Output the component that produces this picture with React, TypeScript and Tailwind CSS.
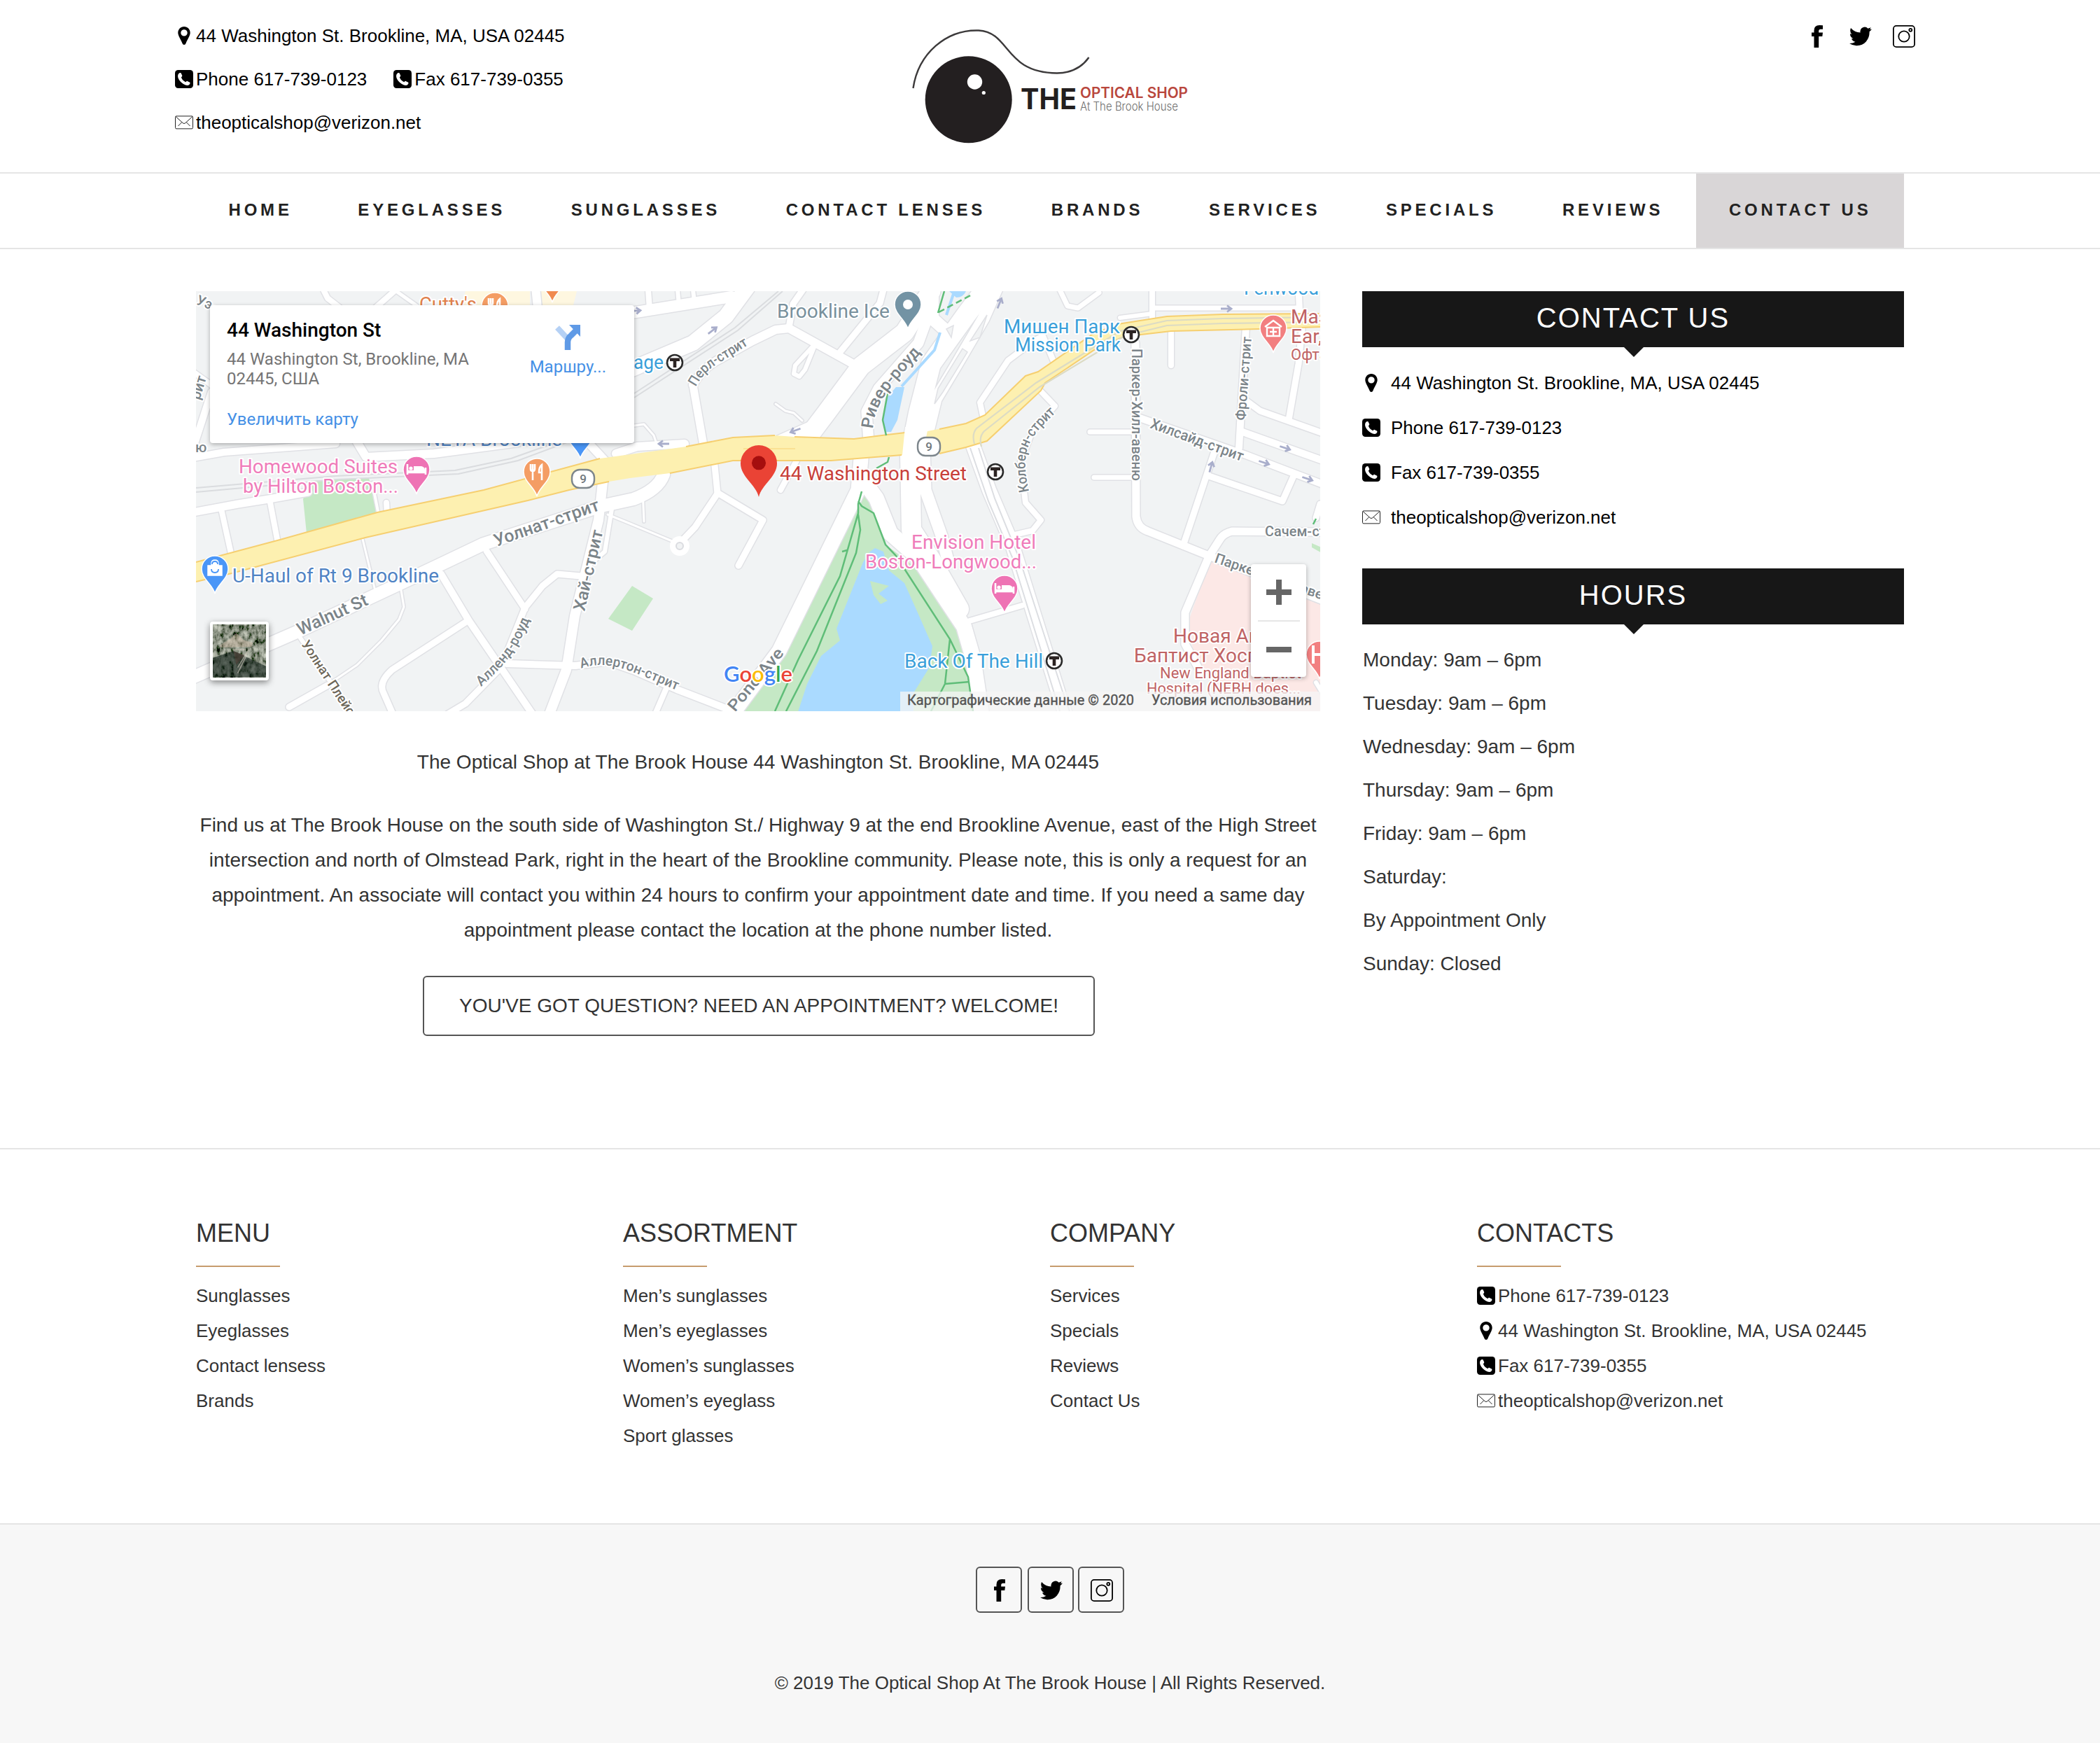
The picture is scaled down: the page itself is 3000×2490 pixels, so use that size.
import type { ReactNode } from "react";

type Road = [string, number];

const ROADS: Road[] = [
  ["M1330 416L1292 475L1230 523L1178 593L1150 630", 27],
  ["M1180 598L1108 630", 12],
  ["M896 448L1045 424", 16],
  ["M1068 410L1037 452L990 490L896 530", 22],
  ["M990 550L1005 636", 11],
  ["M990 550Q1003 525 1030 512L1075 487L1108 471L1127 469L1228 525", 12],
  ["M1127 468L1133 434L1147 414", 9],
  ["M1262 414L1257 433L1200 503", 9],
  ["M1163 496L1150 528L1142 538L1134 534L1136 522L1160 496", 6],
  ["M1108 577L1122 587L1134 590L1146 601", 3],
  ["M1241 632L1238 588L1255 555L1312 490L1328 446", 15],
  ["M1425 410L1405 455L1367 520L1337 570L1320 640L1322 700L1345 765L1354 800", 17],
  ["M1410 410L1380 450L1330 520L1312 590L1300 650L1302 757L1330 800L1370 870", 28],
  ["M1332 410L1332 455L1362 482", 18],
  ["M1230 655L1226 700L1113 930L1035 1035", 21],
  ["M1236 690L1252 712L1272 762L1312 797L1347 850L1377 895L1390 940L1402 1020", 22],
  ["M1021 665L1025 705L993 753L975 772", 9],
  ["M1025 704L1090 743L1055 808", 9],
  ["M1138 658L1115 700", 8],
  ["M270 970L426 902L573 833L628 807L691 777L859 723L905 713Q940 700 948 678", 18],
  ["M862 680L855 743L821 880L809 957L783 1025", 14],
  ["M874 727L864 788L850 800", 6],
  ["M695 787L750 870", 9],
  ["M830 823L796 820L775 837L750 868L716 953L665 1005L640 1020", 9],
  ["M630 820L670 887L762 1022", 10],
  ["M668 887L560 957Q540 975 548 990L562 1022", 9],
  ["M724 948L822 951L868 945L905 958L967 985L1042 1014", 10],
  ["M952 983L936 1020", 8],
  ["M518 770L535 840", 3],
  ["M573 843L577 867L570 885L545 915L510 950L470 977", 3],
  ["M468 979L413 1010", 9],
  ["M426 907L505 1022", 6],
  ["M270 733L340 720L384 713L440 703", 11],
  ["M316 727L331 795", 8],
  ["M386 718L397 776", 8],
  ["M532 690L541 736", 4],
  ["M552 718L553 736", 8],
  ["M270 655L320 646L400 640L480 634", 10],
  ["M508 628L523 653L620 648L740 632", 12],
  ["M840 632L866 660", 12],
  ["M880 648L910 638L978 634", 12],
  ["M460 410L468 426L486 440", 8],
  ["M570 410L536 440", 8],
  ["M566 416L600 440", 5],
  ["M765 410L768 440", 12],
  ["M926 414L928 442", 8],
  ["M968 414L970 436", 6],
  ["M990 414L992 432", 6],
  ["M270 527L302 550", 8],
  ["M302 560L276 640", 10],
  ["M906 608L920 606L934 622L938 634", 3],
  ["M868 735L900 748L965 775M920 745L918 700", 3],
  ["M1384 620L1413 700L1445 775L1512 990L1522 1020", 20],
  ["M1622 490L1623 738Q1625 754 1640 759L1717 790L1890 858", 11],
  ["M1557 617L1620 617", 7],
  ["M1563 682L1620 682", 7],
  ["M1673 472L1673 522", 8],
  ["M1646 410L1646 464", 8],
  ["M1600 454L1646 448", 6],
  ["M1650 440L1852 440", 7],
  ["M1855 410L1857 455", 9],
  ["M1860 470L1855 520L1841 600", 9],
  ["M1780 466L1770 640", 10],
  ["M1777 570L1800 587L1890 619", 9],
  ["M1775 617L1890 658", 10],
  ["M1628 597L1780 650L1890 692", 10],
  ["M1735 645L1690 780", 9],
  ["M1727 680L1832 716L1848 680", 9],
  ["M1886 720L1880 740", 9],
  ["M1890 760L1760 759Q1748 762 1743 770L1727 795L1693 875L1693 920L1715 960", 11],
  ["M1512 410L1525 437L1540 440L1570 418", 7],
  ["M1404 594L1400 575L1440 515L1480 485L1490 480L1505 516", 8],
  ["M1484 556L1507 580L1475 615L1458 660L1465 718L1487 743L1475 758L1445 765", 8],
  ["M1385 887L1460 865", 8],
  ["M1880 975L1905 1016", 6],
];

const RAILS = [
  "M1112 416L1050 468L906 562",
  "M1118 416L1054 472L906 568",
  "M280 697L480 680L650 672L730 655L800 630",
  "M280 703L480 685L655 677L740 658L815 630",
];

const HALO = { paintOrder: "stroke", stroke: "#ffffff", strokeWidth: 4, strokeLinejoin: "round" } as const;

function Label({ x, y, len, size = 27, color, children }: { x: number; y: number; len?: number; size?: number; color: string; children: string }) {
  return (
    <text x={x} y={y} fontSize={size} fill={color} textLength={len} lengthAdjust="spacingAndGlyphs" {...HALO}>
      {children}
    </text>
  );
}

function StreetLabel({ id, d, len, size = 22, color = "#7b8489", children }: { id: string; d: string; len?: number; size?: number; color?: string; children: string }) {
  return (
    <>
      <path id={id} d={d} fill="none" />
      <text fontSize={size} fill={color} textLength={len} lengthAdjust="spacingAndGlyphs" {...HALO}>
        <textPath href={"#" + id}>{children}</textPath>
      </text>
    </>
  );
}

function Pin({ x, y, color, children }: { x: number; y: number; color: string; children?: ReactNode }) {
  return (
    <g transform={`translate(${x} ${y})`}>
      <path d="M0 0C-3-13-19-21-19-35a19 19 0 0 1 38 0C19-21 3-13 0 0Z" fill={color} stroke="#fff" strokeWidth="1.5" />
      {children}
    </g>
  );
}

function BedPin({ x, y }: { x: number; y: number }) {
  return (
    <Pin x={x} y={y} color="#ee73b4">
      <path d="M-13-43v15M-13-31h26M13-28v-10M-13-33h25" fill="none" stroke="#fff" strokeWidth="2.6" />
      <circle cx="-8" cy="-37" r="2.6" fill="#fff" />
      <path d="M-4-40h11q5 1 5 6h-16z" fill="#fff" />
    </Pin>
  );
}

function FoodPin({ x, y }: { x: number; y: number }) {
  return (
    <Pin x={x} y={y} color="#f49d64">
      <path d="M-9-46v7q0 3 3 3t3-3v-7M-6-46v23M7-23v-22q-4 3-4 11h4" fill="none" stroke="#fff" strokeWidth="2.6" />
    </Pin>
  );
}

function Transit({ x, y }: { x: number; y: number }) {
  return (
    <g transform={`translate(${x} ${y})`}>
      <circle r="11" fill="#fff" stroke="#2b2b2b" strokeWidth="2.6" />
      <path d="M-7-6.500h14v4.500h-4.700v9h-4.600v-9h-4.700z" fill="#2b2322" />
    </g>
  );
}

function Shield({ x, y }: { x: number; y: number }) {
  return (
    <g transform={`translate(${x} ${y})`}>
      <rect x="-16" y="-13" width="32" height="26" rx="11" fill="#fff" stroke="#7d868c" strokeWidth="2.4" />
      <text y="6" fontSize="17" fontWeight="500" fill="#6f777c" textAnchor="middle">9</text>
    </g>
  );
}

function Arrow({ x, y, r }: { x: number; y: number; r: number }) {
  return (
    <path transform={`translate(${x} ${y}) rotate(${r})`} d="M-8 0H6M1-4.500L7 0L1 4.500" fill="none" stroke="#a9aecb" strokeWidth="2.800" />
  );
}

function MapDrawing() {
  const pink = "#ef7cba";
  const sky = "#3a9fda";
  const red = "#bf6364";
  return (
    <svg className="block h-full w-full font-['Roboto',sans-serif]" viewBox="280 416 1606 600">
      <rect x="280" y="416" width="1606" height="600" fill="#f1f3f4" />
      <path d="M665 416h92v24h-100zM772 416h52l-6 24h-44z" fill="#fef7e0" />
      <path d="M433 713L442 687L527 683L541 733L438 762ZM903 837L933 855L903 901L869 884ZM1874 776l14 6v8l-14-8z" fill="#c5e8c5" />
      <path d="M1728 802L1890 858V1020H1785L1707 947L1698 887Z" fill="#fce8e6" />
      <path d="M1231 700L1243 713L1265 778L1317 817L1380 920L1393 983V1020H1055L1120 930L1227 717Z" fill="#c5e8c5" />
      <path d="M1250 783L1262 788L1270 815L1292 833L1310 873L1332 923L1328 953L1305 990V1020H1139L1153 977L1173 937L1200 915L1195 898L1233 803L1243 788Z" fill="#aadaff" />
      <path d="M1243 830L1270 837L1255 848L1268 858L1258 863L1248 850Z" fill="#c5e8c5" />
      {RAILS.map((d) => <path key={d} d={d} fill="none" stroke="#dadcdf" strokeWidth="2" />)}
      <g fill="none" strokeLinejoin="round" strokeLinecap="round">
        {ROADS.map(([d, w]) => <path key={d} d={d} stroke="#e0e1e5" strokeWidth={w + 3} />)}
        {ROADS.map(([d, w]) => <path key={d} d={d} stroke="#fff" strokeWidth={w} />)}
      </g>
      <circle cx="971" cy="780" r="14" fill="#fff" />
      <circle cx="971" cy="780" r="5" fill="#f1f3f4" stroke="#dadce0" strokeWidth="2" />
      <path d="M1375 498L1382 503L1347 560L1335 577L1340 555ZM1410 450L1400 482L1386 487ZM1352 470l10-5-3 17z" fill="#f1f3f4" stroke="#e0e1e5" strokeWidth="1.5" />
      <path d="M1386 640L1412 716L1446 796L1506 990L1514 1016M1398 640L1421 712L1457 800L1517 985L1528 1016" fill="none" stroke="#dcdee2" strokeWidth="2" />

      <path d="M280 803L400 771L438 760L539 732L691 700L775 676L857 655L930 645L980 638L1047 625L1107 622L1163 626L1220 627L1293 618L1325 616L1380 605L1407 593L1465 537L1483 531L1560 478L1597 463L1667 452L1747 449L1886 448V467L1797 470L1673 473L1630 478L1603 482L1563 500L1493 547L1487 558L1410 630L1387 637L1347 647L1288 650L1187 658L1047 658L957 676L900 683L870 688L813 700L754 715L522 768L331 819L280 831Z" fill="#fdf0b0" />
      <path d="M280 803L400 771L539 732L691 700L857 655M980 638L1047 625L1107 622M1135 624L1220 627L1293 618M1342 613L1380 605L1407 593L1465 537L1483 531L1560 478L1597 463L1667 452L1747 449L1886 448M1886 467L1797 470L1673 473L1630 478L1603 482L1563 500L1493 547L1487 558L1410 630L1380 639L1342 648M1288 650L1187 658L1047 658L957 676M870 688L813 700L754 715L522 768L331 819L280 831" fill="none" stroke="#f6cf70" strokeWidth="2" />
      <path d="M1293 610L1288 660H1316L1326 610Z" fill="#fff" />
      <path d="M1886 453L1747 455L1667 458L1600 473L1480 547L1395 612Q1388 620 1392 634M1886 460L1747 462L1667 465L1606 480L1485 553L1406 616Q1398 624 1402 638" fill="none" stroke="#dcdbc4" strokeWidth="2.200" />
      <path d="M1062 641H1136" stroke="#f8dc8a" strokeWidth="1.5" />

      <path d="M1280 553H1292L1282 600L1273 617H1266L1260 600L1268 567ZM1356 416h24q-4 9-14 9z" fill="#aadaff" />
      <path d="M1288 552L1335 500L1343 475M1362 420L1352 450" fill="none" stroke="#aadaff" strokeWidth="4" />
      <path d="M1268 562L1261 600L1266 622M1270 653L1268 660L1252 669M1349 416L1340 447M1231 702L1226 720V733L1200 823L1140 943L1107 1016M1226 735L1229 757L1223 790L1167 930L1123 1016M1226 716L1231 723L1248 733L1265 778L1280 794L1357 913L1383 967L1390 1016M1357 913L1350 977L1330 1016M1350 977L1385 974M1203 788L1210 786" fill="none" stroke="#5fbd78" strokeWidth="2.500" />
      <path d="M1341 446L1390 420M1880 741L1874 753" fill="none" stroke="#5fbd78" strokeWidth="2.500" strokeDasharray="9 5" />

      <Arrow x={1018} y={472} r={-38} />
      <Arrow x={908} y={444} r={-5} />
      <Arrow x={1136} y={615} r={160} />
      <Arrow x={948} y={634} r={180} />
      <Arrow x={1428} y={433} r={-68} />
      <Arrow x={1752} y={441} r={0} />
      <Arrow x={1836} y={640} r={18} />
      <Arrow x={1806} y={661} r={18} />
      <Arrow x={1868} y={684} r={18} />
      <Arrow x={1730} y={667} r={-74} />

      <g fontWeight="500">
        <StreetLabel id="s1" d="M994 553Q1006 530 1028 518L1078 487" len={98} size={20}>Перл-стрит</StreetLabel>
        <StreetLabel id="s2" d="M1247 613C1250 570 1280 545 1319 500" len={132} size={24}>Ривер-роуд</StreetLabel>
        <StreetLabel id="s3" d="M1617 498V690" len={189} size={20}>Паркер-Хилл-авеню</StreetLabel>
        <StreetLabel id="s4" d="M1779 601L1788 480" len={120} size={20}>Фроли-стрит</StreetLabel>
        <StreetLabel id="s5" d="M1642 611L1776 660" len={140} size={21}>Хилсайд-стрит</StreetLabel>
        <StreetLabel id="s6" d="M1470 702C1456 640 1470 625 1513 585" len={128} size={20}>Колберн-стрит</StreetLabel>
        <StreetLabel id="s7" d="M1807 766H1900" size={20}>Сачем-стрит</StreetLabel>
        <StreetLabel id="s8" d="M1734 803L1920 868" size={20}>Паркер-Хилл-авеню</StreetLabel>
        <StreetLabel id="s9" d="M709 781L862 727" len={158} size={25}>Уолнат-стрит</StreetLabel>
        <StreetLabel id="s10" d="M429 908L530 862" len={108} size={25}>Walnut St</StreetLabel>
        <StreetLabel id="s11" d="M835 874L862 757" len={118} size={24}>Хай-стрит</StreetLabel>
        <StreetLabel id="s12" d="M687 981C722 950 738 930 758 882" len={120} size={20}>Алленд-роуд</StreetLabel>
        <StreetLabel id="s13" d="M830 955C875 940 905 962 972 988" len={144} size={20}>Аллертон-стрит</StreetLabel>
        <StreetLabel id="s14" d="M430 920L515 1050" size={19} color="#6d675a">Уолнат Плейс</StreetLabel>
        <StreetLabel id="s15" d="M1050 1018L1122 932" len={110} size={23}>Pond Ave</StreetLabel>
        <StreetLabel id="s16" d="M279 434L330 454" size={20}>Уэ-</StreetLabel>
        <StreetLabel id="s17" d="M285 572L298 530" size={21}>рит</StreetLabel>
        <StreetLabel id="s18" d="M279 646H330" size={20}>ю</StreetLabel>
      </g>

      <FoodPin x={707} y={472} />
      <Pin x={789} y={432} color="#f08a4f" />
      <Pin x={829} y={655} color="#4a96f7" />
      <FoodPin x={767} y={709} />
      <BedPin x={595} y={706} />
      <BedPin x={1435} y={876} />
      <Pin x={307} y={848} color="#4a96f7">
        <path d="M-10-40h20v14h-20zM-5-40v-3q0-5 5-5t5 5v3" fill="#fff" stroke="#fff" strokeWidth="1.500" />
        <path d="M-5-35q0 5 5 5t5-5M-4-42q0-4 4-4t4 4" fill="none" stroke="#4a96f7" strokeWidth="1.800" />
      </Pin>
      <Pin x={1297} y={470} color="#7393a4">
        <circle cy="-35" r="7" fill="#fff" />
      </Pin>
      <Pin x={1819} y={504} color="#f27f80">
        <path d="M-9-36h18v12h-18zM-12-37L0-46L12-37" fill="none" stroke="#fff" strokeWidth="2.400" />
        <path d="M0-35v10M-5-30h10" stroke="#fff" strokeWidth="2.400" />
      </Pin>
      <Pin x={1885} y={970} color="#f27f80">
        <path d="M-9-48v26M9-48v26M-9-35h18" stroke="#fff" strokeWidth="4" />
      </Pin>
      <g transform="translate(1084 710) scale(1.370)">
        <path d="M0 0C-3-13-19-21-19-35a19 19 0 0 1 38 0C19-21 3-13 0 0Z" fill="#ea4335" />
        <circle cy="-35.500" r="7.300" fill="#a50e0e" />
      </g>

      <Label x={341} y={676} len={227} color={pink}>Homewood Suites</Label>
      <Label x={347} y={704} len={222} color={pink}>by Hilton Boston...</Label>
      <Label x={332} y={832} len={295} color="#4f83c4">U-Haul of Rt 9 Brookline</Label>
      <Label x={599} y={444} len={82} color="#e0804c">Cutty's</Label>
      <Label x={609} y={637} len={194} color="#4f83c4">NETA Brookline</Label>
      <Label x={905} y={527} len={43} color={sky}>age</Label>
      <Label x={1110} y={454} len={161} color="#78909c">Brookline Ice</Label>
      <Label x={1114} y={686} len={267} color="#c8403a">44 Washington Street</Label>
      <Label x={1434} y={476} len={166} color={sky}>Мишен Парк</Label>
      <Label x={1450} y={502} len={151} color={sky}>Mission Park</Label>
      <Label x={1777} y={421} len={107} color={sky}>Fenwood</Label>
      <Label x={1844} y={462} size={28} color={red}>Mass</Label>
      <Label x={1844} y={490} size={28} color={red}>Ear,</Label>
      <Label x={1844} y={514} size={22} color={red}>Офта</Label>
      <Label x={1302} y={784} len={178} color={pink}>Envision Hotel</Label>
      <Label x={1236} y={812} len={245} color={pink}>Boston-Longwood...</Label>
      <Label x={1292} y={954} len={198} color={sky}>Back Of The Hill</Label>
      <Label x={1676} y={918} size={28} color={red}>Новая Англия</Label>
      <Label x={1620} y={946} size={28} color={red}>Баптист Хоспитал</Label>
      <Label x={1657} y={969} len={202} size={22} color={red}>New England Baptist</Label>
      <Label x={1638} y={991} len={220} size={22} color={red}>Hospital (NEBH does...</Label>

      <Transit x={964} y={518} />
      <Transit x={1616} y={478} />
      <Transit x={1422} y={674} />
      <Transit x={1506} y={944} />
      <Shield x={833} y={684} />
      <Shield x={1327} y={638} />

      <text x="1034" y="974" fontSize="31" fontWeight="600" textLength="98" lengthAdjust="spacingAndGlyphs" className="font-['Lato',sans-serif]" {...HALO}>
        <tspan fill="#4285f4">G</tspan><tspan fill="#ea4335">o</tspan><tspan fill="#fbbc05">o</tspan><tspan fill="#4285f4">g</tspan><tspan fill="#34a853">l</tspan><tspan fill="#ea4335">e</tspan>
      </text>

      <rect x="1286" y="988" width="600" height="28" fill="#f5f5f5" fillOpacity="0.75" />
      <g fontSize="20.500" fill="#555" stroke="#555" strokeWidth="0.400">
        <text x="1296" y="1007" textLength="324" lengthAdjust="spacingAndGlyphs">Картографические данные © 2020</text>
        <text x="1645" y="1007" textLength="229" lengthAdjust="spacingAndGlyphs">Условия использования</text>
      </g>
    </svg>
  );
}

function SatelliteThumb() {
  return (
    <svg className="block h-full w-full" viewBox="0 0 77 76">
      <filter id="terrain" x="0" y="0" width="100%" height="100%">
        <feTurbulence type="fractalNoise" baseFrequency="0.16 0.1" numOctaves="4" seed="8" />
        <feColorMatrix values="1.1 0 0 0 -0.3  1.1 0 0 0 -0.27  1 0 0 0 -0.28  0 0 0 0 1" />
      </filter>
      <rect width="77" height="76" fill="#36443a" />
      <rect width="77" height="76" filter="url(#terrain)" />
      <path d="M0 48L30 38L77 60V76H0Z" fill="#14231d" fillOpacity="0.6" />
      <path d="M10 30L26 20L34 12L44 22L58 26L56 32L12 33Z" fill="#cdb9a6" fillOpacity="0.5" />
      <path d="M28 36L48 36M36 62L52 36M48 46L36 70" stroke="#cfc6ba" strokeWidth="1.500" strokeOpacity="0.6" />
      <path d="M30 38L46 44L34 58Z" fill="#4a3830" fillOpacity="0.6" />
    </svg>
  );
}

function LocationMap() {
  return (
    <div className="relative h-[600px] w-[1606px] overflow-hidden text-left">
      <MapDrawing />
      <div className="absolute left-[20px] top-[20px] flex h-[197px] w-[606px] justify-between rounded-[4px] bg-white pl-[24px] pr-[40px] font-['Roboto',sans-serif] shadow-[0_2px_6px_rgba(0,0,0,0.3)]">
        <div className="flex flex-col whitespace-nowrap">
          <div className="mt-[18px] text-[28px] font-medium leading-[36px] text-black">44 Washington St</div>
          <div className="mt-[9px] text-[24px] leading-[28px] text-[#757575]">44 Washington St, Brookline, MA<br />02445, США</div>
          <div className="mt-[29px] text-[24px] leading-[30px] text-[#4590e6]">Увеличить карту</div>
        </div>
        <div className="flex flex-col items-center pt-[28px]">
          <svg className="h-[36px] w-[36px]" viewBox="0 0 36 36">
            <path d="M3 4L17 19" stroke="#b5d1f5" strokeWidth="8" />
            <path d="M18 36V25Q18 19 23 15L31 7" fill="none" stroke="#5f9ae6" strokeWidth="8.500" />
            <path d="M20 0H36V17Z" fill="#5f9ae6" />
          </svg>
          <div className="mt-[9px] text-[24px] leading-[30px] text-[#4590e6]">Маршру...</div>
        </div>
      </div>
      <div className="absolute left-[20px] top-[472px] h-[84px] w-[84px] rounded-[4px] bg-white p-[4px] shadow-[0_3px_10px_rgba(0,0,0,0.45)]">
        <SatelliteThumb />
      </div>
      <div className="absolute left-[1507px] top-[390px] flex h-[161px] w-[79px] flex-col items-center rounded-[4px] bg-white shadow-[0_2px_6px_rgba(0,0,0,0.3)]">
        <svg className="h-[80px] w-[36px]" viewBox="0 0 36 80"><path d="M0 40H36M18 22V58" stroke="#666" strokeWidth="8" /></svg>
        <div className="h-[2px] w-[60px] bg-[#e6e6e6]" />
        <svg className="h-[79px] w-[36px]" viewBox="0 0 36 79"><path d="M0 40H36" stroke="#666" strokeWidth="8" /></svg>
      </div>
    </div>
  );
}

function PinIcon() {
  return (
    <svg className="h-[26px] w-[26px] shrink-0" viewBox="0 0 26 26">
      <path fillRule="evenodd" d="M13 0C8 0 4.300 4 4.300 8.700C4.300 13 8.200 18 10.500 24Q11.200 26 13 26T15.500 24C17.800 18 21.700 13 21.700 8.700C21.700 4 18 0 13 0ZM13 4.200A4.700 4.700 0 1 1 13 13.600A4.700 4.700 0 1 1 13 4.200Z" />
    </svg>
  );
}

function PhoneIcon() {
  return (
    <svg className="h-[26px] w-[26px] shrink-0" viewBox="0 0 26 26">
      <rect width="26" height="26" rx="4.500" />
      <path d="M5.200 5.200Q7 3.300 8.500 4.300L10.300 8Q10.500 9 8.900 10.400Q10.500 15 15.400 17.300Q16.700 15.600 17.700 15.900L21.300 17.800Q22.200 19.200 20.300 21Q17.500 23.200 12 20Q6.500 16.500 4.600 11.500Q3.300 7.500 5.200 5.200Z" fill="#fff" />
    </svg>
  );
}

function MailIcon() {
  return (
    <svg className="h-[26px] w-[26px] shrink-0" viewBox="0 0 26 26">
      <g fill="none" stroke="#222" strokeWidth="1">
        <rect x="0.500" y="3.900" width="25" height="18" rx="1.500" />
        <path d="M1 4.500L11.300 13.800Q13 15.200 14.700 13.800L25 4.500M4.500 18L9.800 12.600M21.500 18L16.200 12.600" />
      </g>
    </svg>
  );
}

function FacebookIcon() {
  return (
    <svg className="block h-[32px] w-[32px]" viewBox="0 0 32 32">
      <path d="M24 0.200V5.700H20.800Q18.200 5.700 18.200 8.200V10.600H24L23.300 16H18.200V32H11.500V16H8V10.600H11.500V7.500Q11.500 0 19.200 0Q22.500 0 24 0.200Z" />
    </svg>
  );
}

function TwitterIcon() {
  return (
    <svg className="block h-[32px] w-[32px] blur-[0.600px]" viewBox="0 0 32 32">
      <path d="M32 5.500Q30.700 7.500 28.600 9.200Q29 17.500 23.800 23.500Q18.500 29.500 10 29.200Q4.300 29 0 26Q5 26.200 8.500 23.700Q4.500 23 3 19.200H5.500Q1.200 17.300 0.900 12.300L3.500 13Q-0.200 9.500 2 4Q7.500 10.300 15.600 10.600Q14.800 6.500 17.500 4.200Q22.500 0.800 26.600 4.700L30.700 3.200L29.200 6.300Z" />
    </svg>
  );
}

function InstagramIcon() {
  return (
    <svg className="block h-[32px] w-[32px]" viewBox="0 0 32 32">
      <g fill="none" stroke="#000" strokeWidth="1.800">
        <rect x="0.900" y="0.900" width="30.200" height="30.200" rx="4.200" />
        <circle cx="16" cy="16" r="7.700" />
        <circle cx="25.300" cy="6.800" r="2" />
      </g>
    </svg>
  );
}

function Logo() {
  return (
    <svg className="h-[190px] w-[400px]" viewBox="1300 30 400 190">
      <path d="M1304.500 126C1312 76 1352 42 1398 43.500C1444 46 1434 104 1510 104.500Q1540 104 1555.500 82" fill="none" stroke="#3c3a3b" strokeWidth="2.400" />
      <circle cx="1383.700" cy="142.300" r="62" fill="#231f20" />
      <circle cx="1392.500" cy="117" r="10.700" fill="#fff" />
      <circle cx="1405.300" cy="132.500" r="2.600" fill="#fff" />
      <g className="font-['Inter',sans-serif]">
        <text x="1458" y="156" fontSize="41" fontWeight="700" fill="#231f20" textLength="80" lengthAdjust="spacingAndGlyphs">THE</text>
        <text x="1543" y="140" fontSize="21" fontWeight="600" fill="#b9473d" textLength="154" lengthAdjust="spacingAndGlyphs">OPTICAL SHOP</text>
        <text x="1543" y="157.500" fontSize="17" fontWeight="300" fill="#6e6e6e" textLength="140" lengthAdjust="spacingAndGlyphs">At The Brook House</text>
      </g>
    </svg>
  );
}

const ADDRESS = "44 Washington St. Brookline, MA, USA 02445";
const PHONE = "Phone 617-739-0123";
const FAX = "Fax 617-739-0355";
const EMAIL = "theopticalshop@verizon.net";

function ContactLine({ icon, text, gap = "gap-[4px]" }: { icon: ReactNode; text: string; gap?: string }) {
  return (
    <a className={`flex items-center whitespace-nowrap ${gap}`}>
      {icon}
      <span>{text}</span>
    </a>
  );
}

function Header() {
  return (
    <header className="flex h-[246px] justify-between pl-[250px] pr-[264px] pt-[20px] text-[26px] leading-[62px] text-black">
      <div className="w-[1050px]">
        <ContactLine icon={<PinIcon />} text={ADDRESS} />
        <div className="flex gap-[38px]">
          <ContactLine icon={<PhoneIcon />} text={PHONE} />
          <ContactLine icon={<PhoneIcon />} text={FAX} />
        </div>
        <ContactLine icon={<MailIcon />} text={EMAIL} />
      </div>
      <div className="pt-[10px]"><Logo /></div>
      <div className="flex w-[1036px] justify-end gap-[30px] pt-[16px]">
        <FacebookIcon />
        <TwitterIcon />
        <InstagramIcon />
      </div>
    </header>
  );
}

const NAV = ["HOME", "EYEGLASSES", "SUNGLASSES", "CONTACT LENSES", "BRANDS", "SERVICES", "SPECIALS", "REVIEWS"];

function Nav() {
  return (
    <nav className="flex h-[110px] justify-center border-y-2 border-[#e5e5e5] text-[24px] font-bold leading-[104px] tracking-[4.800px] text-[#222]">
      <div className="flex w-[2440px] justify-between whitespace-nowrap">
        {NAV.map((n) => <a key={n} className="px-[46.500px]">{n}</a>)}
        <a className="bg-[#d9d6d7] px-[46.500px]">CONTACT US</a>
      </div>
    </nav>
  );
}

function Banner({ children }: { children: string }) {
  return (
    <div>
      <h2 className="h-[80px] bg-[#171717] text-center text-[40px] leading-[76px] tracking-[2px] text-white">{children}</h2>
      <svg className="ml-[374px] block h-[14px] w-[28px]" viewBox="0 0 28 14"><path d="M0 0H28L14 14Z" fill="#171717" /></svg>
    </div>
  );
}

const HOURS = ["Monday: 9am – 6pm", "Tuesday: 9am – 6pm", "Wednesday: 9am – 6pm", "Thursday: 9am – 6pm", "Friday: 9am – 6pm", "Saturday:", "By Appointment Only", "Sunday: Closed"];

function Sidebar() {
  return (
    <aside className="w-[774px]">
      <Banner>CONTACT US</Banner>
      <div className="mt-[5px] text-[26px] leading-[64px] text-black">
        <ContactLine gap="gap-[15px]" icon={<PinIcon />} text={ADDRESS} />
        <ContactLine gap="gap-[15px]" icon={<PhoneIcon />} text={PHONE} />
        <ContactLine gap="gap-[15px]" icon={<PhoneIcon />} text={FAX} />
        <ContactLine gap="gap-[15px]" icon={<MailIcon />} text={EMAIL} />
      </div>
      <div className="mt-[41px]"><Banner>HOURS</Banner></div>
      <ul className="mt-[6px] pl-px text-[28px] leading-[62px] text-[#333]">
        {HOURS.map((h) => <li key={h}>{h}</li>)}
      </ul>
    </aside>
  );
}

const COLUMNS = [
  { title: "MENU", items: ["Sunglasses", "Eyeglasses", "Contact lensess", "Brands"] },
  { title: "ASSORTMENT", items: ["Men’s sunglasses", "Men’s eyeglasses", "Women’s sunglasses", "Women’s eyeglass", "Sport glasses"] },
  { title: "COMPANY", items: ["Services", "Specials", "Reviews", "Contact Us"] },
];

function FooterColumn({ title, children }: { title: string; children: ReactNode }) {
  return (
    <div className="w-[610px]">
      <h3 className="text-[36px] leading-[46px]">{title}</h3>
      <div className="mb-[16px] mt-[23px] h-[2px] w-[120px] bg-[#c69c6d]" />
      <div className="text-[26px] leading-[50px]">{children}</div>
    </div>
  );
}

function Footer() {
  return (
    <footer className="text-[#333]">
      <div className="flex h-[536px] border-t-2 border-[#e5e5e5] pl-[280px] pt-[97px]">
        {COLUMNS.map((c) => (
          <FooterColumn key={c.title} title={c.title}>
            {c.items.map((i) => <div key={i}>{i}</div>)}
          </FooterColumn>
        ))}
        <FooterColumn title="CONTACTS">
          <ContactLine icon={<PhoneIcon />} text={PHONE} />
          <ContactLine icon={<PinIcon />} text={ADDRESS} />
          <ContactLine icon={<PhoneIcon />} text={FAX} />
          <ContactLine icon={<MailIcon />} text={EMAIL} />
        </FooterColumn>
      </div>
      <div className="flex h-[314px] flex-col items-center border-t-2 border-[#e5e5e5] bg-[#f7f7f7] pt-[60px]">
        <div className="flex text-black">
          <a className="mr-[8px] rounded-[6px] border-2 border-[#555] pb-[14px] pl-[16px] pr-[14px] pt-[16px]"><FacebookIcon /></a>
          <a className="mr-[6px] rounded-[6px] border-2 border-[#555] pb-[14px] pl-[16px] pr-[14px] pt-[16px]"><TwitterIcon /></a>
          <a className="rounded-[6px] border-2 border-[#555] pb-[14px] pl-[16px] pr-[14px] pt-[16px]"><InstagramIcon /></a>
        </div>
        <p className="mt-[80px] text-[26px] leading-[40px]">© 2019 The Optical Shop At The Brook House | All Rights Reserved.</p>
      </div>
    </footer>
  );
}

export default function App() {
  return (
    <div className="min-h-[2490px] w-[3000px] bg-white font-['Liberation_Sans',Arial,sans-serif]">
      <Header />
      <Nav />
      <main className="flex h-[1284px] justify-between px-[280px] pt-[60px]">
        <section className="flex w-[1606px] flex-col items-center text-center text-[28px] leading-[50px] text-[#333]">
          <LocationMap />
          <p className="mt-[48px]">The Optical Shop at The Brook House 44 Washington St. Brookline, MA 02445</p>
          <p className="mt-[40px]">
            Find us at The Brook House on the south side of Washington St./ Highway 9 at the end Brookline Avenue, east of the High Street intersection and north of Olmstead Park, right in the heart of the Brookline community. Please note, this is only a request for an appointment. An associate will contact you within 24 hours to confirm your appointment date and time. If you need a same day appointment please contact the location at the phone number listed.
          </p>
          <a className="mt-[40px] flex h-[86px] w-[960px] translate-x-px items-center justify-center whitespace-nowrap rounded-[6px] border-2 border-[#555]">YOU'VE GOT QUESTION? NEED AN APPOINTMENT? WELCOME!</a>
        </section>
        <Sidebar />
      </main>
      <Footer />
    </div>
  );
}
